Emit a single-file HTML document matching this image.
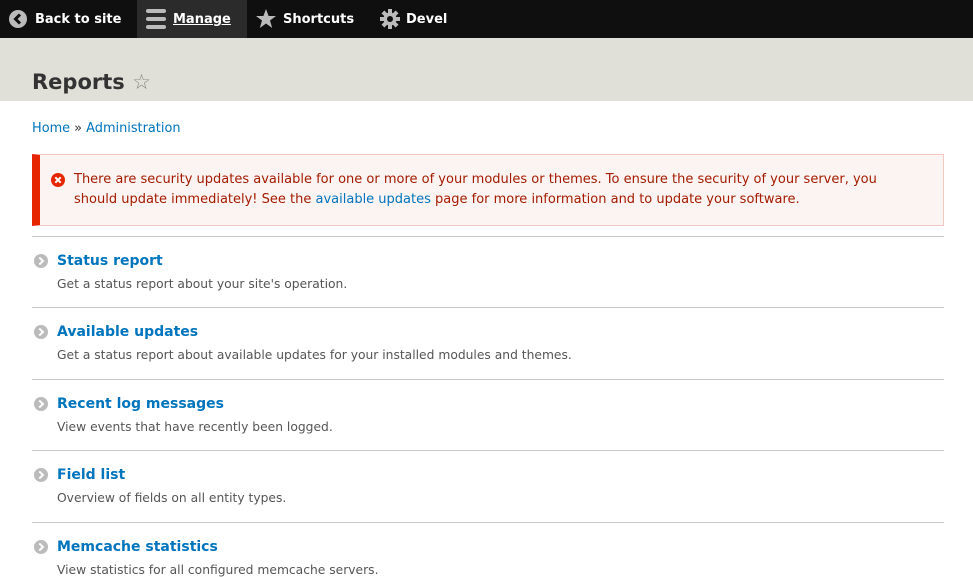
<!DOCTYPE html><html><head><style>
body{margin:0;width:973px;height:565px;overflow:hidden;font-family:"DejaVu Sans",sans-serif;background:#fff;position:relative}
.tb{position:absolute;left:0;top:0;width:973px;height:38px;background:#0f0f0f;box-shadow:0 1px 2px rgba(0,0,0,.4)}
.tb div{position:absolute;top:0;height:38px;line-height:40px;color:#fff;font-weight:bold;font-size:13px}
.hd{position:absolute;top:38px;left:0;width:973px;height:63px;background:#e0e0d8}
h1{position:absolute;left:32px;top:68px;margin:0;font-size:21px;color:#333;font-weight:bold;line-height:28px}
.bc{position:absolute;left:32px;top:121px;font-size:12.9px;color:#333}
a{color:#0074bd;text-decoration:none}
.msg{position:absolute;left:32px;top:154px;width:903px;height:70px;background:#fcf4f2;border:1px solid #f4c9c1;border-left:8px solid #e62600}
.msg p{margin:0;position:absolute;left:34px;top:15px;width:840px;font-size:13px;line-height:20px;color:#a51b00}
.it{position:absolute;left:32px;width:912px;border-top:1px solid #c8c8c8}
.it .t{position:absolute;left:25px;top:16px;font-size:14px;font-weight:bold;color:#0074bd}
.it .d{position:absolute;left:25px;top:40px;font-size:12.3px;color:#555}
.it .i{position:absolute;left:2px;top:17px;width:14px;height:14px;border-radius:50%;background:#bbb}
.it .i:after{content:"";position:absolute;left:3px;top:4px;width:4px;height:4px;border-right:2px solid #fff;border-top:2px solid #fff;transform:rotate(45deg)}
</style></head><body>
<div class="tb">
<div style="left:0;width:137px"><svg style="position:absolute;left:9px;top:10px" width="18" height="18"><circle cx="9" cy="9" r="9" fill="#bbb"/><path d="M11 4.5L6.5 9L11 13.5" stroke="#0f0f0f" stroke-width="3" fill="none"/></svg><span style="position:absolute;left:35px;white-space:nowrap">Back to site</span></div>
<div style="left:137px;width:110px;background:#2b2b2b"><svg style="position:absolute;left:9px;top:9px" width="20" height="20"><rect y="0" width="20" height="4" rx="2" fill="#bbb"/><rect y="8" width="20" height="4" rx="2" fill="#bbb"/><rect y="16" width="20" height="4" rx="2" fill="#bbb"/></svg><span style="position:absolute;left:36px;text-decoration:underline">Manage</span></div>
<div style="left:256px"><svg style="position:absolute;left:0;top:9px" width="20" height="20"><path d="M10 0L12.6 7H20L14 11.5L16.2 19L10 14.5L3.8 19L6 11.5L0 7H7.4Z" fill="#bbb"/></svg><span style="position:absolute;left:27px;white-space:nowrap">Shortcuts</span></div>
<div style="left:380px"><svg style="position:absolute;left:0;top:9px" width="20" height="20"><g fill="#bbb"><circle cx="10" cy="10" r="6.5"/><rect x="8" y="0" width="4" height="20"/><rect x="0" y="8" width="20" height="4"/><rect x="8" y="0" width="4" height="20" transform="rotate(45 10 10)"/><rect x="8" y="0" width="4" height="20" transform="rotate(-45 10 10)"/></g><circle cx="10" cy="10" r="3" fill="#0f0f0f"/></svg><span style="position:absolute;left:26px">Devel</span></div>
</div>
<div class="hd"></div>
<h1>Reports <span style="font-weight:normal;color:#888;font-size:21px">☆</span></h1>
<div class="bc"><a>Home</a> » <a>Administration</a></div>
<div class="msg"><svg style="position:absolute;left:11px;top:18px" width="14" height="14"><circle cx="7" cy="7" r="7" fill="#e62600"/><path d="M4.3 4.3L9.7 9.7M9.7 4.3L4.3 9.7" stroke="#fff" stroke-width="2"/></svg><p>There are security updates available for one or more of your modules or themes. To ensure the security of your server, you should update immediately! See the <a>available updates</a> page for more information and to update your software.</p></div>
<div class="it" style="top:236px"><span class="i"></span><div class="t">Status report</div><div class="d">Get a status report about your site's operation.</div></div>
<div class="it" style="top:307px"><span class="i"></span><div class="t">Available updates</div><div class="d">Get a status report about available updates for your installed modules and themes.</div></div>
<div class="it" style="top:379px"><span class="i"></span><div class="t">Recent log messages</div><div class="d">View events that have recently been logged.</div></div>
<div class="it" style="top:450px"><span class="i"></span><div class="t">Field list</div><div class="d">Overview of fields on all entity types.</div></div>
<div class="it" style="top:522px"><span class="i"></span><div class="t">Memcache statistics</div><div class="d">View statistics for all configured memcache servers.</div></div>
</body></html>
